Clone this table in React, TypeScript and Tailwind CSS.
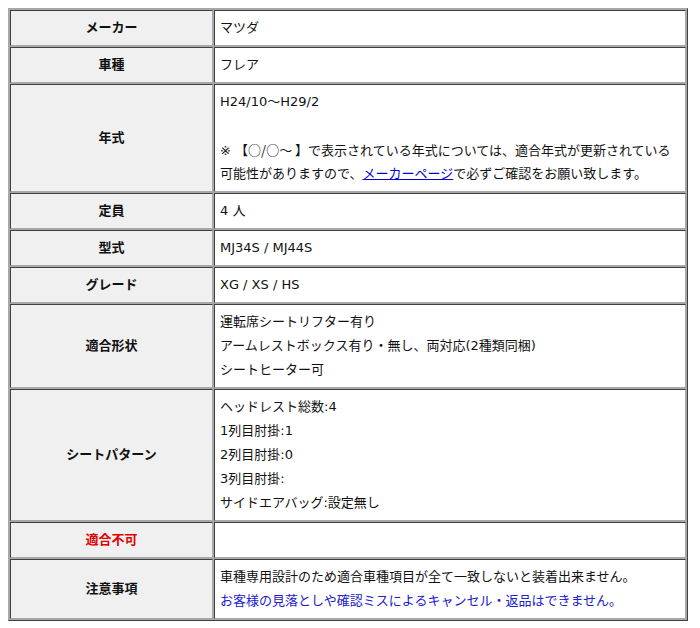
const cjk = "font-[family-name:'Noto_Sans_CJK_JP',sans-serif]";

const rows: { label: string; red?: boolean; lines: React.ReactNode[] }[] = [
  { label: "メーカー", lines: ["マツダ"] },
  { label: "車種", lines: ["フレア"] },
  {
    label: "年式",
    lines: [
      "H24/10～H29/2",
      "\u00a0",
      <>
        ※ <span className={cjk}>【○/○～&nbsp;】</span>で表示されている年式については、適合年式が更新されている
      </>,
      <>
        可能性がありますので、
        <a href="#" className="text-[#0000cc] underline">
          メーカーページ
        </a>
        で必ずご確認をお願い致します。
      </>,
    ],
  },
  { label: "定員", lines: ["4 人"] },
  { label: "型式", lines: ["MJ34S / MJ44S"] },
  { label: "グレード", lines: ["XG / XS / HS"] },
  {
    label: "適合形状",
    lines: ["運転席シートリフター有り", "アームレストボックス有り・無し、両対応(2種類同梱)", "シートヒーター可"],
  },
  {
    label: "シートパターン",
    lines: ["ヘッドレスト総数:4", "1列目肘掛:1", "2列目肘掛:0", "3列目肘掛:", "サイドエアバッグ:設定無し"],
  },
  { label: "適合不可", red: true, lines: ["\u00a0"] },
  {
    label: "注意事項",
    lines: [
      "車種専用設計のため適合車種項目が全て一致しないと装着出来ません。",
      <span className="text-[#2020cc]">お客様の見落としや確認ミスによるキャンセル・返品はできません。</span>,
    ],
  },
];

const cell =
  "border border-t-[#404040] border-l-[#404040] border-b-[#a8a8a8] border-r-[#a8a8a8] py-[5px] align-middle";

export default function App() {
  return (
    <div className="bg-white p-2 font-[family-name:'DejaVu_Sans','Noto_Sans_CJK_JP',sans-serif] text-[13px] leading-[24px] text-[#111]">
      <table className="w-[680px] table-fixed border-separate border-spacing-[1px] bg-[#a8a8a8] border border-t-[#a8a8a8] border-l-[#a8a8a8] border-b-[#404040] border-r-[#404040]">
        <tbody>
          {rows.map((r) => (
            <tr key={r.label}>
              <td className={`${cell} w-[203px] bg-[#f0f0f0] text-center font-bold ${r.red ? "text-[#e00000]" : ""}`}>
                {r.label}
              </td>
              <td className={`${cell} bg-white px-[5px]`}>
                {r.lines.map((l, i) => (
                  <div key={i} className="h-[24px] overflow-hidden whitespace-nowrap">
                    {l}
                  </div>
                ))}
              </td>
            </tr>
          ))}
        </tbody>
      </table>
    </div>
  );
}
